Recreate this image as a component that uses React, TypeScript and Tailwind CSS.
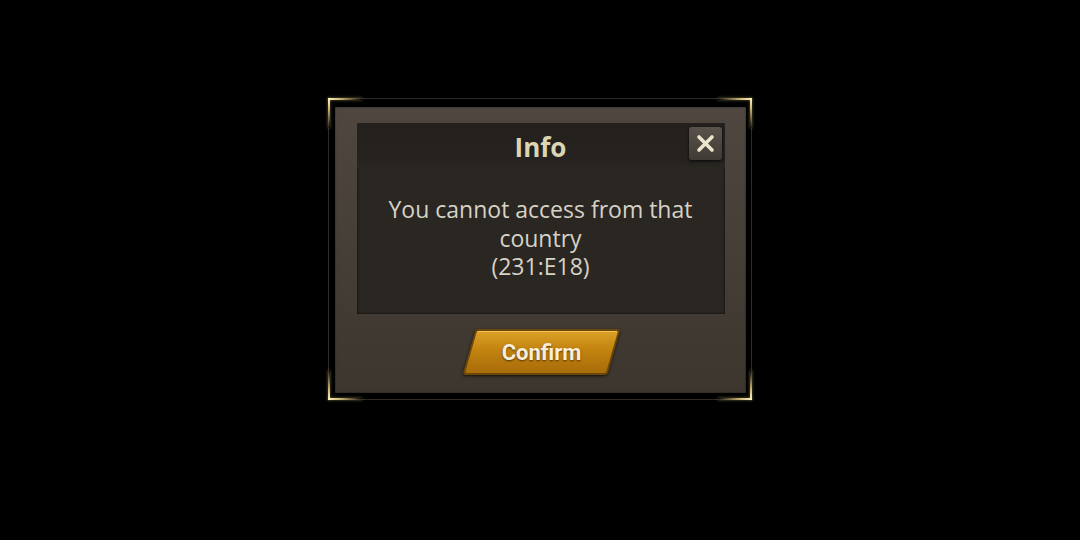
import React from "react";

function CornerGlow({ pos }: { pos: "tl" | "tr" | "bl" | "br" }) {
  const h =
    pos === "tl"
      ? "top-[-1px] left-[-1px] bg-[linear-gradient(to_right,#fff3c4,#cdb574_35%,transparent)]"
      : pos === "tr"
      ? "top-[-1px] right-[-1px] bg-[linear-gradient(to_left,#fff3c4,#cdb574_35%,transparent)]"
      : pos === "bl"
      ? "bottom-[-1px] left-[-1px] bg-[linear-gradient(to_right,#fff3c4,#cdb574_35%,transparent)]"
      : "bottom-[-1px] right-[-1px] bg-[linear-gradient(to_left,#fff3c4,#cdb574_35%,transparent)]";
  const v =
    pos === "tl"
      ? "top-[-1px] left-[-1px] bg-[linear-gradient(to_bottom,#fff3c4,#cdb574_35%,transparent)]"
      : pos === "tr"
      ? "top-[-1px] right-[-1px] bg-[linear-gradient(to_bottom,#fff3c4,#cdb574_35%,transparent)]"
      : pos === "bl"
      ? "bottom-[-1px] left-[-1px] bg-[linear-gradient(to_top,#fff3c4,#cdb574_35%,transparent)]"
      : "bottom-[-1px] right-[-1px] bg-[linear-gradient(to_top,#fff3c4,#cdb574_35%,transparent)]";
  return (
    <>
      <div className={`absolute h-[2px] w-[34px] shadow-[0_0_3px_rgba(255,230,150,0.45)] ${h}`} />
      <div className={`absolute w-[2px] h-[30px] shadow-[0_0_3px_rgba(255,230,150,0.45)] ${v}`} />
    </>
  );
}

export default function App() {
  return (
    <div className="w-full h-[540px] bg-black flex justify-center pt-[98px] font-['Open_Sans','Noto_Sans',sans-serif]">
      {/* outer frame */}
      <div className="relative w-[424px] h-[302px] border border-[#2f2a25] pt-[8px] pl-[6px] pr-[5px] pb-[6px]">
        <CornerGlow pos="tl" />
        <CornerGlow pos="tr" />
        <CornerGlow pos="bl" />
        <CornerGlow pos="br" />

        {/* brown panel */}
        <div className="w-full h-full bg-[linear-gradient(to_bottom,#4f473f,#3c362f)] px-[21px] pt-[16px] flex flex-col items-center shadow-[inset_0_0_2px_rgba(0,0,0,0.6)]">
          {/* dark content box */}
          <div className="relative w-[368px] h-[191px] bg-[#2a2622] shadow-[inset_0_0_3px_rgba(0,0,0,0.8)] flex flex-col">
            <div className="h-[45px] bg-[linear-gradient(to_bottom,#23201d,#25221f_85%,#2a2622)] flex items-center justify-center">
              <span className="text-[26px] font-bold text-[#dcd5b4] leading-none mt-[2px]">Info</span>
            </div>
            <button className="absolute top-[4px] right-[3px] w-[33px] h-[33px] rounded-[3px] bg-[linear-gradient(to_bottom,#58524b,#403b36)] shadow-[0_1px_3px_rgba(0,0,0,0.8)] flex items-center justify-center">
              <svg width="19" height="19" viewBox="0 0 19 19">
                <path d="M3 3 L16 16 M16 3 L3 16" stroke="#ebe5cb" strokeWidth="3.6" strokeLinecap="round" />
              </svg>
            </button>
            <div className="pt-[27px] text-center text-[23px] leading-[28.5px] text-[#d6d2c6]">
              <div>You cannot access from that</div>
              <div>country</div>
              <div>(231:E18)</div>
            </div>
          </div>

          {/* confirm button */}
          <div className="mt-[15px] ml-[2px] relative w-[145px] h-[46px]">
            <div className="absolute inset-0 -skew-x-[16deg] rounded-[3px] bg-[#6b4708] p-[2px] shadow-[0_1px_3px_rgba(0,0,0,0.7)]">
              <div className="w-full h-full rounded-[2px] bg-[linear-gradient(to_bottom,#dba128,#c2830f_45%,#a86c0a)] shadow-[inset_0_1px_0_rgba(255,220,120,0.6)]" />
            </div>
            <div className="absolute inset-0 flex items-center justify-center font-['Roboto',sans-serif] font-bold text-[22px] text-[#f6eedb] [text-shadow:0_1px_2px_rgba(60,30,0,0.8)]">
              Confirm
            </div>
          </div>
        </div>
      </div>
    </div>
  );
}
